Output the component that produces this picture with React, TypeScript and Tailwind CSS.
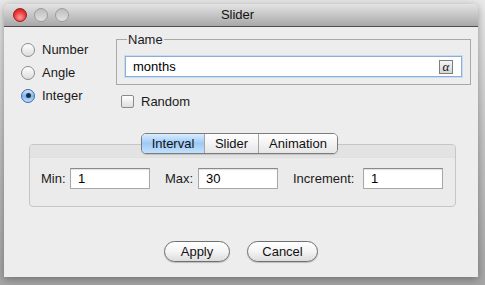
import { useState } from "react";

const font = { fontFamily: '"Liberation Sans", Arial, sans-serif' };

const Radio = ({ label, checked }: { label: string; checked?: boolean }) => (
  <div className="flex h-[23px] items-center gap-[7px]">
    {checked ? (
      <div className="flex h-[14px] w-[14px] items-center justify-center rounded-full border border-[#3d6aa8] bg-gradient-to-b from-[#cfe6fd] via-[#7fb6ee] to-[#b9dcfb]">
        <div className="h-[5px] w-[5px] rounded-full bg-[#1c2c44]" />
      </div>
    ) : (
      <div className="h-[14px] w-[14px] rounded-full border border-[#8c8c8c] bg-gradient-to-b from-[#ffffff] to-[#dcdcdc]" />
    )}
    <span className="text-[13px] text-[#1a1a1a]">{label}</span>
  </div>
);

const Field = ({ value }: { value: string }) => (
  <div className="flex h-[21px] w-[80px] items-center border border-[#a8a8a8] border-t-[#8a8a8a] bg-white pl-[7px] text-[13px] text-black shadow-[inset_0_1px_1px_rgba(0,0,0,0.12)]">
    {value}
  </div>
);

const App = () => {
  const [tab, setTab] = useState("Interval");
  const tabs = [
    { name: "Interval", w: "w-[62px]" },
    { name: "Slider", w: "w-[54px]" },
    { name: "Animation", w: "w-[79px]" },
  ];

  return (
    <div
      className="h-[285px] w-[485px] bg-gradient-to-b from-[#e9e9e9] via-[#c4c4c4] to-[#a5a5a5] pl-[4px] pt-[4px]"
      style={font}
    >
      <div className="flex h-[273px] w-[474px] flex-col overflow-hidden rounded-t-[5px] shadow-[0_2px_8px_rgba(0,0,0,0.35)]">
        {/* title bar */}
        <div className="relative flex h-[23px] items-center border-b border-[#4e4e4e] bg-gradient-to-b from-[#e4e4e4] to-[#a8a8a8] pl-[9px]">
          <div className="flex gap-[7px]">
            <div className="h-[14px] w-[14px] rounded-full border border-[#9a1e1e] bg-[radial-gradient(circle_at_50%_70%,#ff9a9a_0%,#ea3b3b_55%,#b61818_100%)]" />
            <div className="h-[14px] w-[14px] rounded-full border border-[#9b9b9b] bg-gradient-to-b from-[#bdbdbd] to-[#e2e2e2]" />
            <div className="h-[14px] w-[14px] rounded-full border border-[#9b9b9b] bg-gradient-to-b from-[#bdbdbd] to-[#e2e2e2]" />
          </div>
          <div className="flex-1 pr-[72px] text-center text-[13px] text-[#111]">Slider</div>
        </div>

        {/* body */}
        <div className="flex flex-1 flex-col bg-[#ededed] pt-[5px]">
          <div className="flex">
            <div className="w-[112px] pl-[17px] pt-[6px]">
              <Radio label="Number" />
              <Radio label="Angle" />
              <Radio label="Integer" checked />
            </div>
            <div className="flex flex-col">
              <fieldset className="w-[355px] border border-[#a9a9a9] px-[8px] pb-[7px]">
                <legend className="ml-[2px] px-[1px] text-[13px] leading-[15px] text-[#1a1a1a]">Name</legend>
                <div className="mt-[9px] flex h-[21px] items-center border border-[#89aed8] bg-white pl-[7px] pr-[8px] shadow-[0_0_0_1px_#c9dcf0]">
                  <span className="flex-1 text-[13px] text-black">months</span>
                  <span className="flex h-[14px] w-[14px] items-center justify-center border border-[#7d7d7d] bg-gradient-to-b from-[#f4f4f4] to-[#d6d6d6] font-['Liberation_Serif'] text-[13px] italic leading-none text-[#111]">
                    α
                  </span>
                </div>
              </fieldset>
              <div className="ml-[5px] mt-[9px] flex h-[15px] items-center gap-[7px]">
                <div className="h-[13px] w-[13px] rounded-[2px] border border-[#8a8a8a] bg-gradient-to-b from-white to-[#dedede]" />
                <span className="text-[13px] text-[#1a1a1a]">Random</span>
              </div>
            </div>
          </div>

          {/* tabs */}
          <div className="relative z-10 mt-[24px] flex justify-center pr-[3px]">
            <div className="flex h-[21px] overflow-hidden rounded-[5px] border border-[#7c7c7c] shadow-[0_1px_1px_rgba(0,0,0,0.15)]">
              {tabs.map((t, i) => (
                <button
                  key={t.name}
                  onClick={() => setTab(t.name)}
                  className={`${t.w} flex items-center justify-center text-[13px] text-[#111] ${i > 0 ? "border-l border-[#a5a5a5]" : ""} ${
                    tab === t.name
                      ? "bg-gradient-to-b from-[#d9ecff] via-[#9ccaf6] to-[#c3e1fd]"
                      : "bg-gradient-to-b from-white via-[#f3f3f3] to-[#e6e6e6]"
                  }`}
                >
                  {t.name}
                </button>
              ))}
            </div>
          </div>

          {/* panel */}
          <div className="ml-[25px] mt-[-10px] h-[63px] w-[427px] overflow-hidden rounded-[4px] border border-[#c6c6c6] bg-[#ebebeb]">
            <div className="h-[13px] border-b border-[#e0e0e0] bg-[#e3e3e3]" />
            <div className="mt-[10px] flex items-center pl-[11px]">
              <span className="w-[29px] text-[13px] text-[#1a1a1a]">Min:</span>
              <Field value="1" />
              <span className="ml-[15px] w-[33px] text-[13px] text-[#1a1a1a]">Max:</span>
              <Field value="30" />
              <span className="ml-[15px] w-[70px] text-[13px] text-[#1a1a1a]">Increment:</span>
              <Field value="1" />
            </div>
          </div>

          {/* buttons */}
          <div className="mt-[34px] flex justify-center gap-[17px]">
            <button className="h-[21px] w-[66px] rounded-full border border-[#6f6f6f] bg-gradient-to-b from-white via-[#f4f4f4] to-[#dcdcdc] text-[13px] text-[#111] shadow-[0_1px_1px_rgba(0,0,0,0.2)]">
              Apply
            </button>
            <button className="h-[21px] w-[71px] rounded-full border border-[#6f6f6f] bg-gradient-to-b from-white via-[#f4f4f4] to-[#dcdcdc] text-[13px] text-[#111] shadow-[0_1px_1px_rgba(0,0,0,0.2)]">
              Cancel
            </button>
          </div>
        </div>
      </div>
    </div>
  );
};

export default App;
